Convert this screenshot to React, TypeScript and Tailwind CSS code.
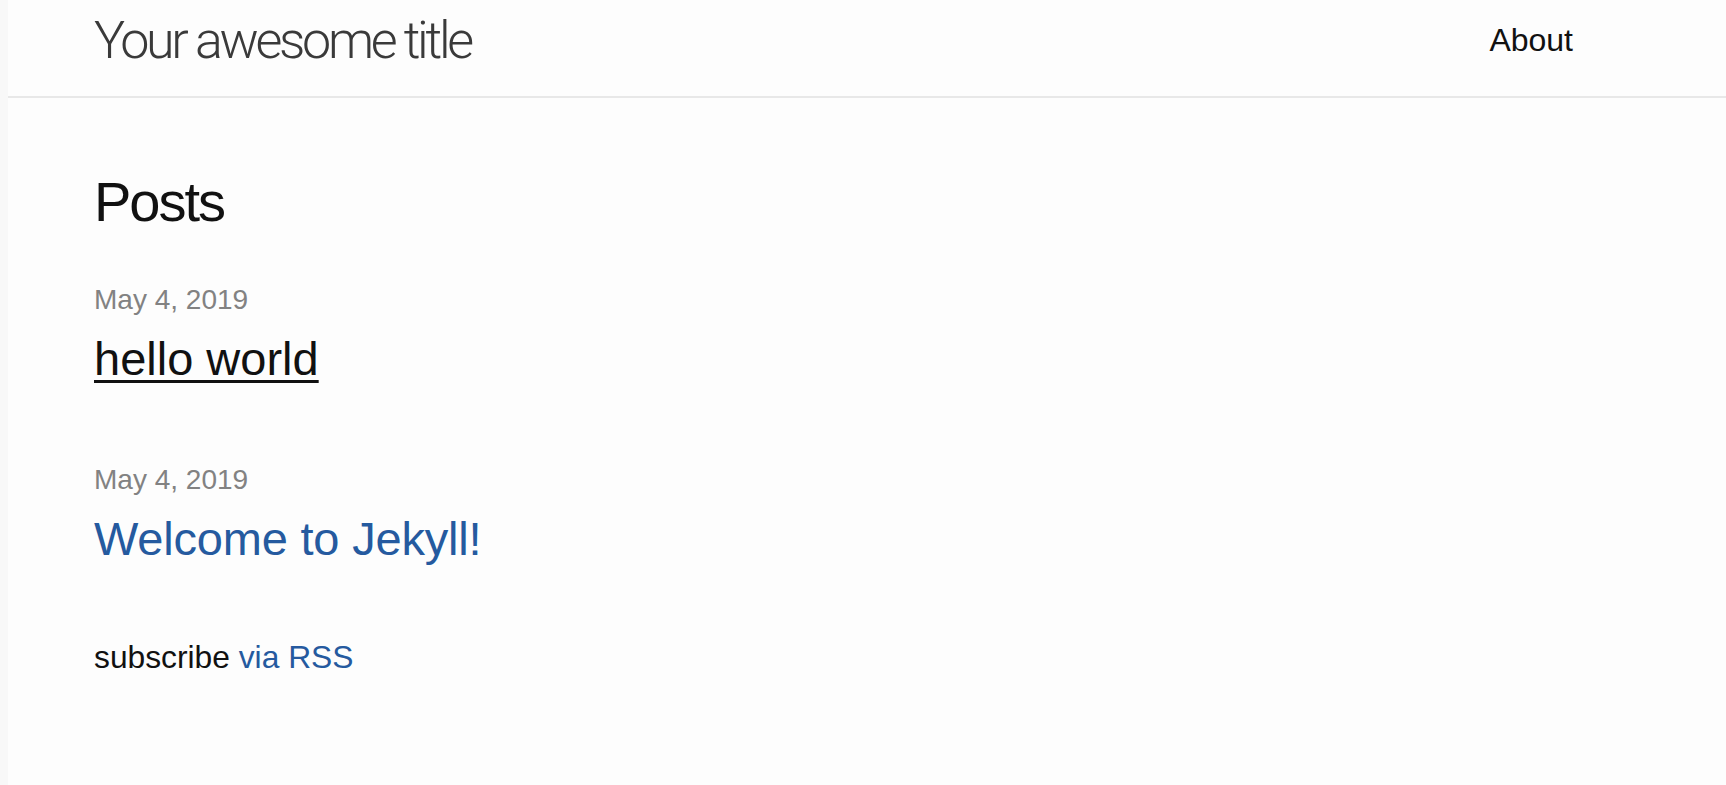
import React from 'react';

const posts = [
  { date: 'May 4, 2019', title: 'hello world', visited: true },
  { date: 'May 4, 2019', title: 'Welcome to Jekyll!', visited: false },
];

export default function App() {
  return (
    <div className="flex min-h-screen bg-[#fdfdfd] font-['Liberation_Sans',Arial,sans-serif]">
      <div className="w-[8px] shrink-0 bg-[#f8f8f8]" />
      <div className="flex flex-1 flex-col">
        <header className="flex h-[98px] items-start justify-between border-b-2 border-[#e8e8e8] pl-[86px] pr-[153px]">
          <a className="mt-[15px] block font-['Roboto',sans-serif] text-[52px] leading-[52px] font-light tracking-[-3.3px] text-[#3a3a3a]">
            Your awesome title
          </a>
          <nav className="mt-[24px]">
            <a className="block text-[32px] leading-[32px] text-[#111]">About</a>
          </nav>
        </header>

        <main className="flex flex-col pl-[86px] pt-[76px]">
          <h2 className="text-[56px] leading-[56px] tracking-[-2px] text-[#111]">Posts</h2>
          <ul className="mt-[56px] flex flex-col gap-[84px]">
            {posts.map((post) => (
              <li key={post.title} className="flex flex-col gap-[21px]">
                <span className="text-[28px] leading-[28px] text-[#828282]">{post.date}</span>
                <h3 className="text-[47px] leading-[47px]">
                  <a
                    className={
                      post.visited
                        ? 'text-[#111] underline decoration-[3px] underline-offset-[5px]'
                        : 'text-[#255a9f] tracking-[-0.2px]'
                    }
                  >
                    {post.title}
                  </a>
                </h3>
              </li>
            ))}
          </ul>
          <p className="mt-[79px] text-[31.75px] leading-[32px] text-[#111]">
            subscribe <a className="text-[#255a9f]">via RSS</a>
          </p>
        </main>
      </div>
    </div>
  );
}
